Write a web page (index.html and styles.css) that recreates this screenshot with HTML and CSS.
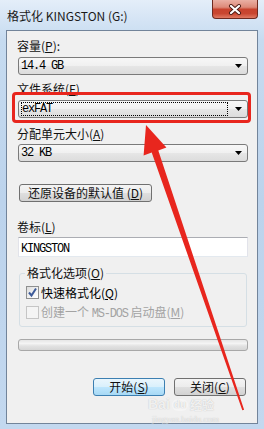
FILE: index.html
```html
<!DOCTYPE html>
<html lang="zh-CN">
<head>
<meta charset="utf-8">
<title>格式化 KINGSTON (G:)</title>
<link rel="stylesheet" href="styles.css">
</head>
<body>
<div class="titlebar">
  <span class="title">格式化 KINGSTON (G:)</span>
  <div class="close">
    <svg width="14" height="11" viewBox="0 0 14 11">
      <path d="M3 2 L11 9 M11 2 L3 9" stroke="#4a1a14" stroke-width="4" stroke-linecap="round"/>
      <path d="M3 2 L11 9 M11 2 L3 9" stroke="#ffffff" stroke-width="2.2" stroke-linecap="round"/>
    </svg>
  </div>
</div>
<div class="client">
  <div class="label l1">容量(<u>P</u>):</div>
  <div class="combo c1"><span class="mono val">14.4 GB</span><svg class="dd" width="7" height="4" viewBox="0 0 7 4"><polygon points="0,0 7,0 3.5,4" fill="#000"/></svg></div>
  <div class="label l2">文件系统(<u>F</u>)</div>
  <div class="combo c2"><span class="mono focusrect">exFAT</span><svg class="dd" width="7" height="4" viewBox="0 0 7 4"><polygon points="0,0 7,0 3.5,4" fill="#000"/></svg></div>
  <div class="label l3">分配单元大小(<u>A</u>)</div>
  <div class="combo c3"><span class="mono val">32 KB</span><svg class="dd" width="7" height="4" viewBox="0 0 7 4"><polygon points="0,0 7,0 3.5,4" fill="#000"/></svg></div>
  <div class="btn restore">还原设备的默认值 (<u>D</u>)</div>
  <div class="label l4">卷标(<u>L</u>)</div>
  <div class="input"><span class="mono">KINGSTON</span></div>
  <fieldset class="group">
    <legend>格式化选项(<u>O</u>)</legend>
    <div class="check">
      <span class="box on"><svg width="11" height="11" viewBox="0 0 11 11"><path d="M2 5.5 L4.5 8.5 L9 1.5" fill="none" stroke="#3d5b99" stroke-width="2"/></svg></span>
      <span>快速格式化(<u>Q</u>)</span>
    </div>
    <div class="check off">
      <span class="box"></span>
      <span>创建一个 <span class="mono">MS-DOS</span> 启动盘(<u>M</u>)</span>
    </div>
  </fieldset>
  <div class="progress"></div>
  <div class="buttons">
    <div class="btn default">开始(<u>S</u>)</div>
    <div class="btn">关闭(<u>C</u>)</div>
  </div>
</div>
<div class="mark-rect"></div>
<svg class="mark-arrow" width="264" height="429" viewBox="0 0 264 429">
  <polygon points="146,125 166.4,147.6 158.3,150.4 244.1,409.7 242.3,410.3 151.7,152.6 143.6,155.4" fill="#e8261e"/>
</svg>
<div class="wm">
  <div class="wm1"><span>Bai</span><span class="du">du</span><span class="jy">经验</span></div>
  <div class="wm2">jingyan.baidu.com</div>
</div>
</body>
</html>
```
FILE: styles.css
```css
html, body {
  margin: 0;
  padding: 0;
}
body {
  width: 264px;
  height: 429px;
  overflow: hidden;
  position: relative;
  background: linear-gradient(to bottom, #e4eef9 0, #d6e5f5 18px, #c6dbf0 40px, #bcd3ec 200px, #c3d8ef 429px);
  font-family: "Noto Sans CJK SC", "Liberation Sans", sans-serif;
  font-size: 12px;
  color: #000;
}
u { text-decoration: underline; text-underline-offset: 1px; }
.mono {
  font-family: "Liberation Mono", "Noto Sans CJK SC", monospace;
  font-size: 12px;
  letter-spacing: -1.2px;
}

.titlebar {
  height: 30px;
  display: flex;
  justify-content: space-between;
  align-items: flex-start;
}
.title {
  margin: 8px 0 0 7px;
  line-height: 16px;
  font-size: 12px;
  color: #1a1a1a;
}
.close {
  width: 46px;
  height: 19px;
  margin-right: 6px;
  box-sizing: border-box;
  border: 1px solid #6e2a20;
  border-top: none;
  border-radius: 0 0 4px 4px;
  background: linear-gradient(to bottom, #eab0a4 0, #dd8a79 40%, #c8432e 52%, #c94630 75%, #e07a63 100%);
  display: flex;
  align-items: center;
  justify-content: center;
}

.client {
  margin: 0 6px;
  height: 394px;
  box-sizing: border-box;
  border: 1px solid #72849a;
  background: #f0f0f0;
  padding: 0 0 0 11px;
}
.label {
  line-height: 14px;
  margin-left: -1px;
  color: #111;
}
.l1 { margin-top: 8px; margin-bottom: 4px; }
.l2 { margin-top: 7px; margin-bottom: 4px; }
.l3 { margin-top: 9px; margin-bottom: 3px; }
.l4 { margin-top: 18px; margin-bottom: 3px; }

.combo {
  width: 230px;
  height: 18px;
  box-sizing: border-box;
  border: 1px solid #7a7a7a;
  border-radius: 3px;
  background: linear-gradient(to bottom, #f7f7f7 0, #f0f0f0 50%, #e6e6e6 51%, #dcdcdc 100%);
  display: flex;
  align-items: center;
  justify-content: space-between;
  padding: 0 5px 0 2px;
}
.combo .val { line-height: 14px; padding-left: 0; }
.focusrect {
  width: 207px;
  height: 14px;
  box-sizing: border-box;
  border: 1px dotted #000;
  line-height: 12px;
}
.dd { flex: none; }

.btn {
  height: 18px;
  box-sizing: border-box;
  border: 1px solid #707070;
  border-radius: 3px;
  background: linear-gradient(to bottom, #f4f4f4 0, #ececec 50%, #dfdfdf 51%, #d2d2d2 100%);
  display: flex;
  align-items: center;
  justify-content: center;
  line-height: 16px;
  color: #111;
}
.restore {
  width: 133px;
  margin: 22px 0 0 1px;
}

.input {
  width: 230px;
  height: 20px;
  box-sizing: border-box;
  border: 1px solid #e2e3ea;
  border-top-color: #abadb3;
  border-bottom-color: #e3e9ef;
  background: #fff;
  padding-left: 2px;
  line-height: 18px;
}

.group {
  width: 228px;
  box-sizing: border-box;
  margin: 9px 0 0 1px;
  padding: 5px 5px 7px 5px;
  border: 1px solid #d5dfe5;
  border-radius: 3px;
  min-width: 0;
}
.group legend {
  padding: 0 2px;
  line-height: 14px;
  color: #111;
}
.check {
  display: flex;
  align-items: center;
  gap: 2px;
  height: 14px;
  margin-left: 1px;
}
.check + .check { margin-top: 6px; }
.box {
  width: 13px;
  height: 13px;
  box-sizing: border-box;
  border: 1px solid #8e8f8f;
  background: linear-gradient(135deg, #dcdcdc 0, #f4f4f4 60%, #ffffff 100%);
  display: flex;
  align-items: center;
  justify-content: center;
}
.off { color: #a3a3a3; }
.off .box {
  border-color: #c5c5c5;
  background: #f4f4f4;
}

.progress {
  width: 230px;
  height: 12px;
  box-sizing: border-box;
  margin-top: 12px;
  border: 1px solid #a8a8a8;
  border-radius: 3px;
  background: linear-gradient(to bottom, #e6e6e6 0, #f4f4f4 35%, #e2e2e2 60%, #d6d6d6 100%);
}

.buttons {
  width: 230px;
  margin-top: 27px;
  display: flex;
  justify-content: flex-end;
  gap: 9px;
  padding-right: 2px;
  box-sizing: border-box;
}
.buttons .btn { width: 72px; }
.default {
  border-color: #3c7fb1;
  background: linear-gradient(to bottom, #eaf6fd 0, #d9f0fc 50%, #bee6fd 51%, #a7d9f5 100%);
}

.mark-rect {
  position: absolute;
  left: 12px;
  top: 92px;
  width: 239px;
  height: 31px;
  box-sizing: border-box;
  border: 3px solid #e8261e;
  border-radius: 4px;
}
.mark-arrow {
  position: absolute;
  left: 0;
  top: 0;
  pointer-events: none;
}

.wm {
  position: absolute;
  left: 148px;
  top: 397px;
  color: rgba(255, 255, 255, 0.8);
  text-shadow: 0 0 1px rgba(110, 110, 110, 0.45);
  pointer-events: none;
}
.wm1 {
  display: flex;
  align-items: center;
  font-family: "Liberation Sans", sans-serif;
  font-size: 14px;
  font-weight: bold;
  line-height: 15px;
}
.wm1 .du {
  font-size: 10px;
  line-height: 12px;
  border-radius: 6px;
  padding: 0 2px;
  background: rgba(255, 255, 255, 0.35);
  margin: 0 2px;
}
.wm1 .jy {
  font-family: "Noto Sans CJK SC", sans-serif;
  font-size: 12px;
  line-height: 15px;
}
.wm2 {
  font-family: "Liberation Serif", serif;
  font-size: 9px;
  line-height: 10px;
  margin: 2px 0 0 4px;
  color: rgba(255, 255, 255, 0.7);
}
```
